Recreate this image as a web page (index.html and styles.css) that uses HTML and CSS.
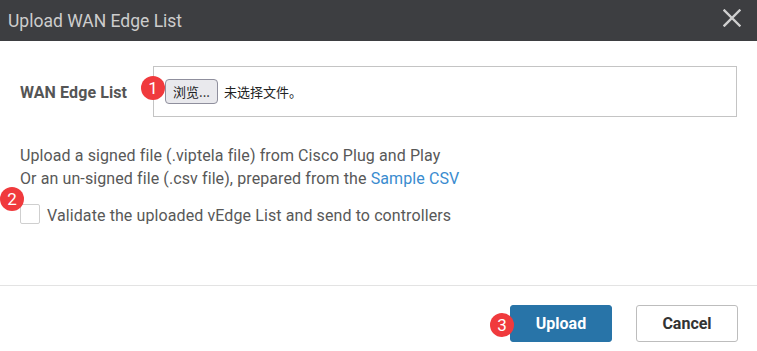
FILE: index.html
```html
<!DOCTYPE html>
<html lang="en">
<head>
  <meta charset="UTF-8" />
  <title>Upload WAN Edge List</title>
  <link rel="stylesheet" href="styles.css">
</head>
<body>
  <div class="modal">
    <div class="modal-header">
      <span class="modal-title">Upload WAN Edge List</span>
      <button class="close-btn" aria-label="Close">
        <svg width="18" height="18" viewBox="0 0 18 18">
          <path d="M1.5 1.5 L16.5 16.5 M16.5 1.5 L1.5 16.5" stroke="#cfcfcf" stroke-width="2.4" stroke-linecap="square"/>
        </svg>
      </button>
    </div>

    <div class="modal-body">
      <div class="field-row">
        <label class="field-label">WAN Edge List</label>
        <div class="file-box">
          <span class="badge badge-one">1</span>
          <button class="file-btn">浏览...</button>
          <span class="file-name">未选择文件。</span>
        </div>
      </div>

      <div class="help">
        <div>Upload a signed file (.viptela file) from Cisco Plug and Play</div>
        <div>Or an un-signed file (.csv file), prepared from the <a href="#">Sample CSV</a></div>
      </div>

      <div class="check-row">
        <span class="badge badge-two">2</span>
        <span class="checkbox"></span>
        <span class="check-label">Validate the uploaded vEdge List and send to controllers</span>
      </div>
    </div>

    <div class="modal-footer">
      <div class="upload-wrap">
        <span class="badge badge-three">3</span>
        <button class="btn btn-primary">Upload</button>
      </div>
      <button class="btn btn-default">Cancel</button>
    </div>
  </div>
</body>
</html>
```

FILE: styles.css
```css
body, html {
  margin: 0;
  padding: 0;
  background: #fff;
  font-family: Roboto, "Liberation Sans", sans-serif;
}

.modal {
  width: 757px;
  height: 351px;
  display: flex;
  flex-direction: column;
  overflow: hidden;
}

.modal-header {
  height: 41px;
  background: #3d3e41;
  display: flex;
  align-items: center;
  justify-content: space-between;
  padding: 0 16px 0 8px;
  box-sizing: border-box;
}

.modal-title {
  color: #cdcdcd;
  font-size: 17.5px;
}

.close-btn {
  background: none;
  border: none;
  padding: 0;
  width: 18px;
  height: 18px;
  margin-top: -6px;
  cursor: pointer;
}

.close-btn svg {
  display: block;
}

.modal-body {
  padding: 25px 20px 0 20px;
  flex: 1;
  color: #585858;
  font-size: 16px;
  letter-spacing: 0.1px;
}

/* file picker row */
.field-row {
  display: flex;
  align-items: center;
}

.field-label {
  width: 133px;
  font-weight: bold;
  font-size: 16px;
  color: #555;
  padding-top: 2px;
}

.file-box {
  position: relative;
  flex: 1;
  height: 51px;
  border: 1px solid #c4c4c4;
  box-sizing: border-box;
  display: flex;
  align-items: center;
  padding-left: 11px;
  letter-spacing: 0;
}

.file-btn {
  height: 25px;
  width: 53px;
  padding: 0;
  background: #e9e9ed;
  border: 1px solid #8f8f9d;
  border-radius: 4px;
  font-family: "Noto Sans CJK SC", sans-serif;
  font-size: 13px;
  color: #222;
}

.file-name {
  margin-left: 6px;
  font-family: "Noto Sans CJK SC", sans-serif;
  font-size: 13px;
  color: #222;
}

/* red step badges */
.badge {
  position: absolute;
  width: 24px;
  height: 24px;
  border-radius: 50%;
  background: #f03a3d;
  color: #fff;
  font-size: 17px;
  line-height: 24px;
  text-align: center;
  letter-spacing: 0;
  z-index: 2;
}

.badge-one {
  left: -13px;
  top: 9px;
}

.badge-two {
  left: -20px;
  top: -16px;
}

.badge-three {
  left: -20px;
  top: 8px;
}

.help {
  margin-top: 27px;
  line-height: 23px;
}

.help a {
  color: #3a8ccf;
  text-decoration: none;
}

.check-row {
  position: relative;
  display: flex;
  align-items: center;
  margin-top: 13px;
}

.checkbox {
  width: 20px;
  height: 20px;
  box-sizing: border-box;
  border: 1px solid #cfcfcf;
  border-radius: 2px;
}

.check-label {
  margin-left: 7px;
  padding-top: 3px;
}

.modal-footer {
  border-top: 1px solid #e3e3e3;
  height: 66px;
  box-sizing: border-box;
  display: flex;
  justify-content: flex-end;
  align-items: flex-start;
  padding: 19px 19px 0 0;
  gap: 24px;
}

.upload-wrap {
  position: relative;
}

.btn {
  height: 37px;
  width: 102px;
  font-family: Roboto, "Liberation Sans", sans-serif;
  font-size: 16px;
  font-weight: bold;
  border-radius: 3px;
  cursor: pointer;
}

.btn-primary {
  background: #2874a8;
  border: 1px solid #2874a8;
  color: #fff;
}

.btn-default {
  background: #fff;
  border: 1px solid #bdbdbd;
  color: #333;
}
```
